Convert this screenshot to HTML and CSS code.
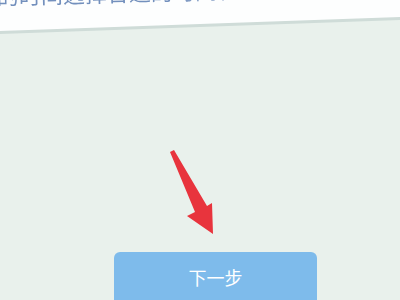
FILE: index.html
```html
<!DOCTYPE html>
<html lang="zh">
<head>
<meta charset="utf-8">
<link rel="stylesheet" href="styles.css">
</head>
<body>
<div class="page">
  <div class="card-shadow">
    <div class="card">
      <p class="card-text">的时间选择合适的时间和地点</p>
    </div>
  </div>
  <div class="middle">
    <svg class="arrow" width="60" height="100" viewBox="0 0 60 100">
      <polygon points="8,14 12,12 45,68 50,65 51,96 25,78 33,74" fill="#e8343d"/>
    </svg>
  </div>
  <div class="footer">
    <button class="next-btn">下一步</button>
  </div>
</div>
</body>
</html>
```
FILE: styles.css
```css
html, body {
  margin: 0;
  padding: 0;
}
body {
  width: 400px;
  height: 300px;
  overflow: hidden;
  background: #e9f1ec;
  font-family: "Noto Sans CJK SC", "Noto Sans", sans-serif;
}
.page {
  display: flex;
  flex-direction: column;
  height: 300px;
}
.card-shadow {
  height: 34px;
  background: #cfdcd8;
  clip-path: polygon(0 0, 100% 0, 100% 20px, 0 34px);
}
.card {
  height: 32px;
  background: #fdfefe;
  clip-path: polygon(0 0, 100% 0, 100% 17px, 0 31px);
  overflow: hidden;
}
.card-text {
  margin: -17px 0 0 -3px;
  font-size: 22px;
  line-height: 24px;
  color: #7390bd;
  white-space: nowrap;
  transform: rotate(-1.5deg);
  transform-origin: left bottom;
  -webkit-mask-image: linear-gradient(to right, #000 0, #000 45%, rgba(0,0,0,0.2) 65%, rgba(0,0,0,0) 80%);
  mask-image: linear-gradient(to right, #000 0, #000 45%, rgba(0,0,0,0.2) 65%, rgba(0,0,0,0) 80%);
}
.middle {
  flex: 1;
  display: flex;
  align-items: flex-end;
  padding-left: 162px;
  padding-bottom: 14px;
}
.arrow {
  display: block;
}
.footer {
  display: flex;
  padding-left: 114px;
}
.next-btn {
  width: 203px;
  height: 48px;
  border: none;
  border-radius: 6px 6px 0 0;
  background: #7ebbeb;
  color: #ffffff;
  font-family: "Noto Sans CJK SC", sans-serif;
  font-size: 18px;
  line-height: 24px;
  display: flex;
  align-items: flex-start;
  justify-content: center;
  padding: 13px 0 0 0;
}
```
